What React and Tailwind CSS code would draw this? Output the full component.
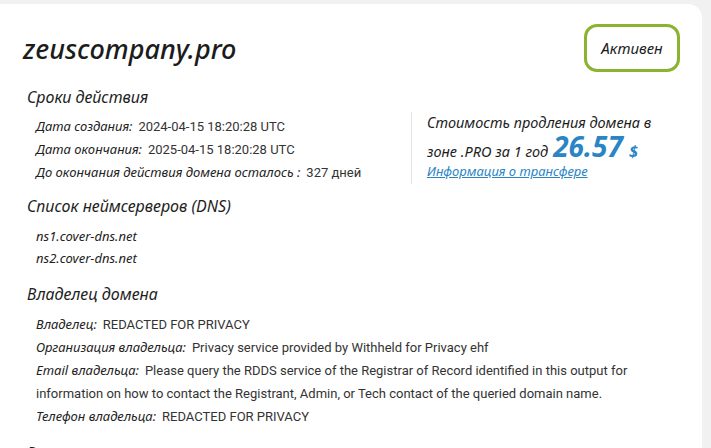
import React from 'react';

const dates = [
  ['Дата создания:', '2024-04-15 18:20:28 UTC'],
  ['Дата окончания:', '2025-04-15 18:20:28 UTC'],
  ['До окончания действия домена осталось :', '327 дней'],
];

const owner = [
  ['Владелец:', 'REDACTED FOR PRIVACY'],
  ['Организация владельца:', 'Privacy service provided by Withheld for Privacy ehf'],
  [
    'Email владельца:',
    'Please query the RDDS service of the Registrar of Record identified in this output for information on how to contact the Registrant, Admin, or Tech contact of the queried domain name.',
  ],
  ['Телефон владельца:', 'REDACTED FOR PRIVACY'],
];

const labelFont = { fontFamily: '"Noto Sans", "Open Sans", sans-serif' };

function Row({ label, value }) {
  return (
    <div className="text-[13px] leading-[23px] text-[#222]">
      <span className="italic" style={labelFont}>{label}</span>
      <span className="ml-[6px] text-[#333]" style={{ fontFamily: 'Roboto, "Liberation Sans", sans-serif' }}>
        {value}
      </span>
    </div>
  );
}

function Heading({ children }) {
  return (
    <h2 className="text-[16px] italic leading-[22px] text-[#1e1e1e]" style={labelFont}>
      {children}
    </h2>
  );
}

export default function App() {
  return (
    <div className="min-h-screen overflow-hidden bg-[#f1f1f1] pt-[4px] pr-[9px]">
      <div className="h-[460px] rounded-tr-[14px] bg-white pl-[23px] pr-[22px] pt-[20px]">
        <div className="flex items-start justify-between">
          <h1
            className="mt-[8px] text-[27px] font-medium italic leading-[34px] text-[#1c1c1c]"
            style={labelFont}
          >
            zeuscompany.pro
          </h1>
          <div
            className="flex h-[48px] w-[96px] items-center justify-center rounded-[13px] border-[3px] border-[#8cb32f] text-[15px] italic text-[#1c1c1c]"
            style={labelFont}
          >
            Активен
          </div>
        </div>

        <div className="mt-[14px] pl-[4px]">
          <Heading>Сроки действия</Heading>
          <div className="flex">
            <div className="mt-[7px] w-[384px] pl-[9px]">
              {dates.map(([l, v]) => (
                <Row key={l} label={l} value={v} />
              ))}
            </div>
            <div className="mt-[4px] h-[72px] border-l border-[#e6e6e6] pl-[15px]">
              <div className="text-[14.5px] italic leading-[20px] text-[#1c1c1c]" style={labelFont}>
                Стоимость продления домена в
              </div>
              <div className="flex h-[28px] items-baseline text-[14.5px] italic leading-[28px] text-[#1c1c1c]" style={labelFont}>
                <span>зоне .PRO за 1 год</span>
                <span className="ml-[5px] text-[28px] font-bold leading-[28px] text-[#2a85c4]">26.57</span>
                <span className="ml-[6px] text-[16px] font-bold text-[#2a85c4]">$</span>
              </div>
              <a
                href="#"
                className="mt-[1px] block text-[13px] italic leading-[20px] text-[#2a85c4] underline"
                style={labelFont}
              >
                Информация о трансфере
              </a>
            </div>
          </div>

          <div className="mt-[11px]">
            <Heading>Список неймсерверов (DNS)</Heading>
          </div>
          <div className="mt-[9px] pl-[9px] text-[13px] italic leading-[21.5px] text-[#222]" style={labelFont}>
            <div>ns1.cover-dns.net</div>
            <div>ns2.cover-dns.net</div>
          </div>

          <div className="mt-[14px]">
            <Heading>Владелец домена</Heading>
          </div>
          <div className="mt-[8px] w-[620px] pl-[9px]">
            {owner.map(([l, v]) => (
              <Row key={l} label={l} value={v} />
            ))}
          </div>

          <div className="mt-[14px]">
            <Heading>Регистратор</Heading>
          </div>
        </div>
      </div>
    </div>
  );
}
